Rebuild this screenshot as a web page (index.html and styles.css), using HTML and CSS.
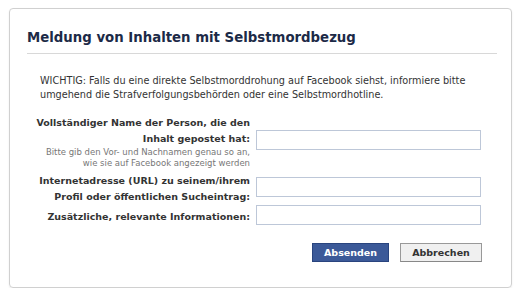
FILE: index.html
```html
<!DOCTYPE html>
<html lang="de">
  <head>
    <meta charset="UTF-8" />
    <title>Meldung von Inhalten mit Selbstmordbezug</title>
    <link rel="stylesheet" href="styles.css">
  </head>
  <body>
    <div class="dialog">
      <h2 class="title">Meldung von Inhalten mit Selbstmordbezug</h2>
      <p class="note">WICHTIG: Falls du eine direkte Selbstmorddrohung auf Facebook siehst, informiere bitte umgehend die Strafverfolgungsbehörden oder eine Selbstmordhotline.</p>
      <div class="form">
        <div class="row row-name">
          <label class="label">
            Vollständiger Name der Person, die den Inhalt gepostet hat:
            <span class="hint">Bitte gib den Vor- und Nachnamen genau so an,<br>wie sie auf Facebook angezeigt werden</span>
          </label>
          <input class="field" type="text">
        </div>
        <div class="row row-url">
          <label class="label">Internetadresse (URL) zu seinem/ihrem Profil oder öffentlichen Sucheintrag:</label>
          <input class="field" type="text">
        </div>
        <div class="row row-extra">
          <label class="label">Zusätzliche, relevante Informationen:</label>
          <input class="field" type="text">
        </div>
      </div>
      <div class="buttons">
        <button class="btn btn-send">Absenden</button>
        <button class="btn btn-cancel">Abbrechen</button>
      </div>
    </div>
  </body>
</html>
```

FILE: styles.css
```css
* {
  margin: 0;
  padding: 0;
  box-sizing: border-box;
}
body {
  background-color: #fff;
  font-family: "DejaVu Sans", "Liberation Sans", sans-serif;
  color: #333;
}
.dialog {
  width: 503px;
  height: 280px;
  margin: 8px 0 0 9px;
  border: 1px solid #d0d0d0;
  border-radius: 4px;
  box-shadow: 0 1px 2px rgba(0, 0, 0, .08);
  padding: 0 14px 0 17px;
}

.title {
  margin-top: 17px;
  padding-bottom: 3px;
  border-bottom: 1px solid #d8d8d8;
  font-size: 13.3px;
  font-weight: bold;
  color: #1c2a47;
  line-height: 24px;
}

.note {
  margin: 20px 0 0 13px;
  font-size: 9.7px;
  line-height: 14px;
}

/* Formular: Label rechtsbündig, Feld daneben */
.form {
  margin-top: 13px;
}
.row {
  display: flex;
  align-items: flex-start;
}
.label {
  flex: none;
  width: 229px;
  text-align: right;
  font-size: 9.5px;
  font-weight: bold;
  line-height: 16px;
  padding-right: 6px;
}
.hint {
  display: block;
  font-size: 8.5px;
  font-weight: normal;
  color: #777;
  line-height: 11px;
  white-space: nowrap;
}
.field {
  width: 225px;
  height: 20px;
  border: 1px solid #bdc7d8;
}
.row-name .field {
  margin-top: 15px;
}
.row-url {
  margin-top: 4px;
}
.row-url .field {
  margin-top: 4px;
}
.row-extra .label {
  padding-top: 4px;
}

.buttons {
  display: flex;
  justify-content: flex-end;
  gap: 11px;
  margin: 18px 15px 0 0;
}
.btn {
  height: 19px;
  font-family: inherit;
  font-size: 9.5px;
  font-weight: bold;
  cursor: pointer;
}
.btn-send {
  width: 77px;
  background-color: #3b5998;
  border: 1px solid #29447e;
  color: #fff;
}
.btn-cancel {
  width: 82px;
  background-color: #f0f0f0;
  border: 1px solid #999;
  border-bottom-color: #888;
  color: #333;
}
```
